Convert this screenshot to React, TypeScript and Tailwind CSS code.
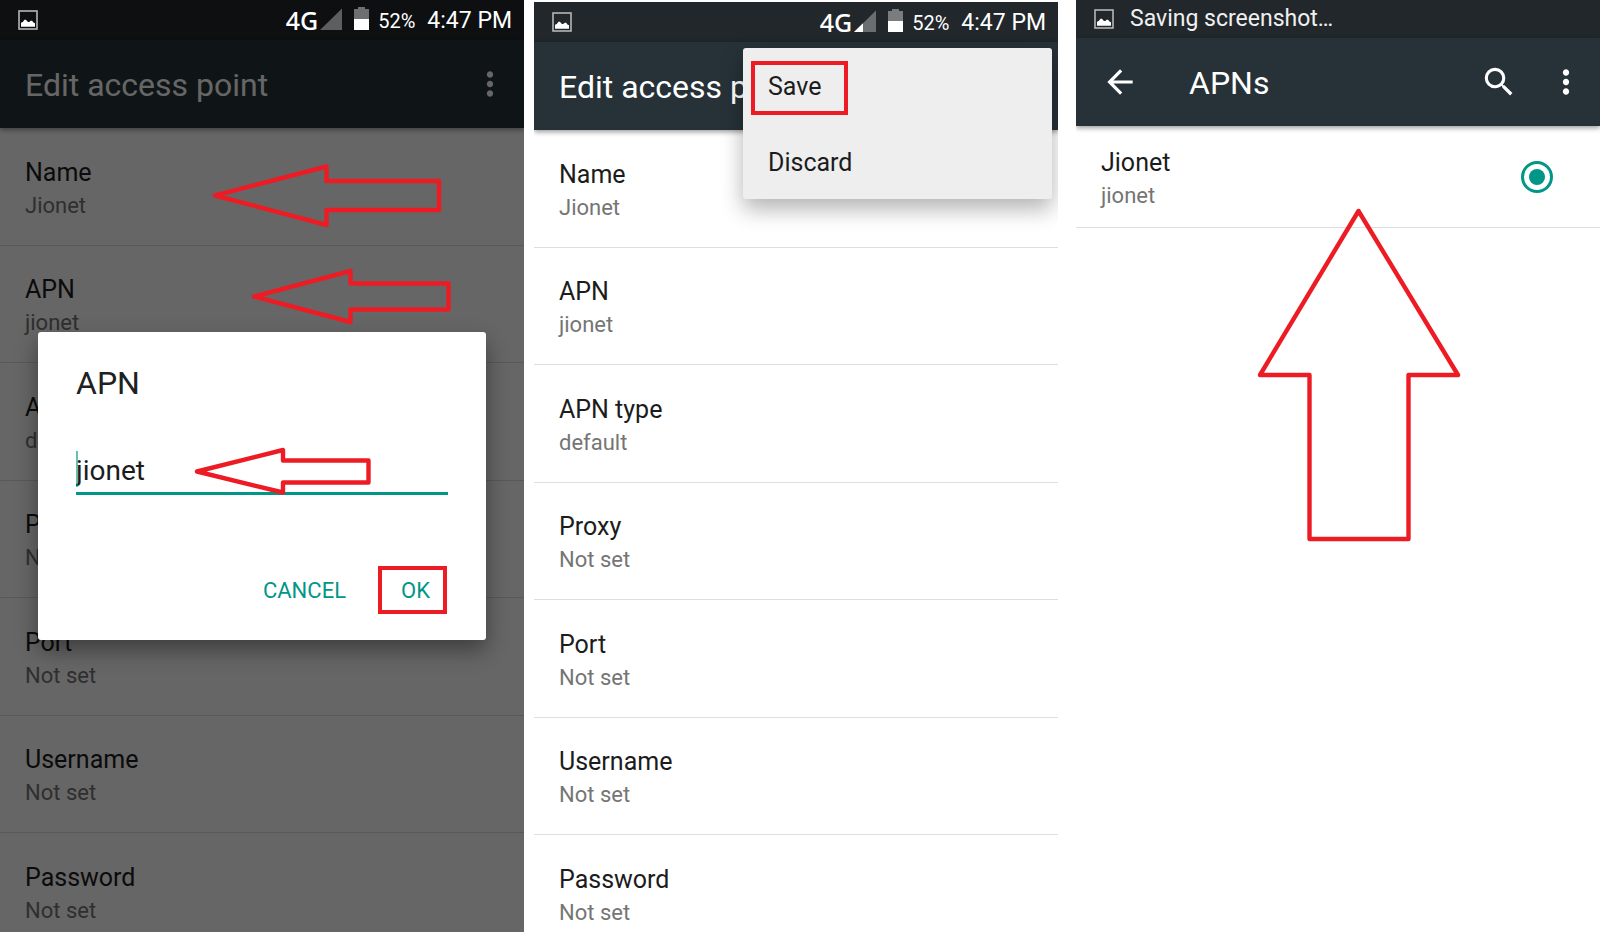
import type { ReactNode } from 'react'
import { MdArrowBack, MdMoreVert, MdSearch } from 'react-icons/md'

const fields = [
  { label: 'Name', value: 'Jionet' },
  { label: 'APN', value: 'jionet' },
  { label: 'APN type', value: 'default' },
  { label: 'Proxy', value: 'Not set' },
  { label: 'Port', value: 'Not set' },
  { label: 'Username', value: 'Not set' },
  { label: 'Password', value: 'Not set' },
]

function PictureIcon() {
  return (
    <svg className="size-5 shrink-0" viewBox="0 0 20 20" aria-hidden="true">
      <rect x="1" y="1" width="18" height="18" fill="none" stroke="#b4b7b8" strokeWidth="1.6" />
      <path d="M3 16.8v-4l1.8-.8 1.7-2.2h1.4l2 2.2h1.3l1.6-1.2h1.3l1.3 1.6 1.6.8v3.6z" fill="#fff" />
    </svg>
  )
}

function StatusBar({ signal = false }: { signal?: boolean }) {
  return (
    <div className="relative z-10 flex h-10 items-center pl-[18px] pr-3 text-white">
      <PictureIcon />
      <span className="ml-auto font-['Noto_Sans',sans-serif] text-[25px] leading-8 font-medium">4G</span>
      <svg className="ml-0.5 h-[26px] w-[22px]" viewBox="0 0 22 26" aria-hidden="true">
        <path d="M22 1.5V23H0z" fill="#fff" fillOpacity="0.33" />
        {signal && <path d="M9 14.2V23H0z" fill="#fff" />}
      </svg>
      <svg className="ml-3 h-[26px] w-[15px]" viewBox="0 0 15 26" aria-hidden="true">
        <path d="M4 0h7v2h4v10H0V2h4z" fill="#fff" fillOpacity="0.4" />
        <path d="M0 12h15v11H0z" fill="#fff" />
      </svg>
      <span className="ml-[9px] pt-0.5 text-[20px] leading-8">52%</span>
      <span className="ml-3 pt-0.5 text-[23px] leading-8">4:47 PM</span>
    </div>
  )
}

function AppBar({ children }: { children: ReactNode }) {
  return (
    <header className="relative flex h-[88px] items-center bg-[#263238] pl-[25px] pr-[15px] text-white shadow-[0_2px_5px_rgba(0,0,0,0.4)]">
      {children}
    </header>
  )
}

function MenuButton() {
  return (
    <button type="button" aria-label="More options">
      <MdMoreVert className="size-[38px]" />
    </button>
  )
}

function FieldList() {
  return (
    <ul>
      {fields.map((field) => (
        <li key={field.label} className="h-[117px] border-b border-[#dedede] odd:h-[118px]">
          <button type="button" className="flex h-full w-full flex-col justify-center pt-1.5 pl-[25px] text-left">
            <span className="text-[25px] leading-8 text-[#1c1c1c]">{field.label}</span>
            <span className="text-[22px] leading-[34px] text-[#757575]">{field.value}</span>
          </button>
        </li>
      ))}
    </ul>
  )
}

function Arrow({ className, points, viewBox }: { className: string; points: string; viewBox: string }) {
  return (
    <svg className={className} viewBox={viewBox} aria-hidden="true">
      <polygon points={points} fill="none" stroke="#ed1c24" strokeWidth="4.4" strokeLinejoin="round" />
    </svg>
  )
}

function EditDialogScreen() {
  return (
    <section className="relative flex-1 overflow-hidden bg-white">
      <div className="absolute inset-0 z-1 bg-black/60" />
      <div className="bg-[#21272b]">
        <StatusBar />
      </div>
      <AppBar>
        <h1 className="flex-1 pt-0.5 text-[32px] leading-10">Edit access point</h1>
        <MenuButton />
      </AppBar>
      <FieldList />

      {/* Dialog */}
      <div className="absolute inset-0 z-20 flex items-center px-[38px] pt-10">
        <form
          role="dialog"
          aria-labelledby="dialog-title"
          className="w-full rounded-[3px] bg-white px-[38px] pt-[31px] pb-[26px] shadow-[0_10px_22px_rgba(0,0,0,0.4)]"
        >
          <label id="dialog-title" htmlFor="apn" className="block text-[32px] leading-10 text-[#212121]">
            APN
          </label>
          <div className="relative mt-[46px]">
            <span className="absolute top-0.5 left-0 h-9 w-0.5 bg-[#009688]/60" />
            <input
              id="apn"
              type="text"
              defaultValue="jionet"
              className="block h-[46px] w-full border-b-[3px] border-[#009688] text-[28px] text-[#1c1c1c] outline-none"
            />
          </div>
          <div className="mt-[71px] flex justify-end gap-8 pr-px text-[22px] text-[#009688]">
            <button type="button">CANCEL</button>
            <button type="button" className="h-12 w-[69px] border-4 border-[#ed1c24] pl-1.5">
              OK
            </button>
          </div>
        </form>
      </div>

      {/* Pointers */}
      <Arrow
        className="absolute top-[160px] left-[210px] z-30 h-[70px] w-[234px]"
        viewBox="210 160 234 70"
        points="215,195.5 326.5,166.5 326.5,181 439,181 439,210 326.5,210 326.5,225"
      />
      <Arrow
        className="absolute top-[266px] left-[250px] z-30 h-[60px] w-[202px]"
        viewBox="250 266 202 60"
        points="254,296.5 350.5,271 350.5,283.5 448.5,283.5 448.5,309.5 350.5,309.5 350.5,322"
      />
      <Arrow
        className="absolute top-[444px] left-[192px] z-30 h-[54px] w-[180px]"
        viewBox="192 444 180 54"
        points="197,471.5 283,450 283,460.5 368.5,460.5 368.5,482.5 283,482.5 283,492.5"
      />
    </section>
  )
}

function EditMenuScreen() {
  return (
    <section className="relative mt-0.5 ml-2.5 flex-1 overflow-hidden bg-white">
      <div className="bg-[#21272b]">
        <StatusBar signal />
      </div>
      <AppBar>
        <h1 className="flex-1 pt-0.5 text-[32px] leading-10">Edit access point</h1>
        <MenuButton />
      </AppBar>
      <FieldList />

      {/* Overflow menu */}
      <div
        role="menu"
        className="absolute top-[46px] right-1.5 z-20 w-[309px] rounded-[3px] bg-[#eee] text-[25px] text-[#1c1c1c] shadow-[0_10px_22px_rgba(0,0,0,0.3)]"
      >
        <button type="button" role="menuitem" className="block h-[76px] w-full pt-0.5 pl-[25px] text-left">
          Save
        </button>
        <button type="button" role="menuitem" className="block h-[75px] w-full pt-0.5 pl-[25px] text-left">
          Discard
        </button>
        <span className="absolute top-[13px] left-2 h-[54px] w-[97px] border-4 border-[#ed1c24]" />
      </div>
    </section>
  )
}

function ApnListScreen() {
  return (
    <section className="relative ml-[18px] flex-1 overflow-hidden bg-white">
      <div className="flex h-[38px] items-center gap-4 bg-[#21272b] pl-[18px] text-[23px] leading-8 text-[#f0f0f0]">
        <PictureIcon />
        <span>Saving screenshot…</span>
      </div>
      <AppBar>
        <button type="button" aria-label="Back">
          <MdArrowBack className="size-[38px]" />
        </button>
        <h1 className="flex-1 pt-0.5 pl-[50px] text-[32px] leading-10">APNs</h1>
        <button type="button" aria-label="Search" className="mr-[29px]">
          <MdSearch className="size-[38px]" />
        </button>
        <MenuButton />
      </AppBar>
      <label className="flex h-[102px] items-center border-b border-[#dedede] pr-[47px] pl-[25px]">
        <span className="flex flex-1 flex-col pt-1.5">
          <span className="text-[25px] leading-8 text-[#1c1c1c]">Jionet</span>
          <span className="text-[22px] leading-[34px] text-[#757575]">jionet</span>
        </span>
        <input
          type="radio"
          name="selected-apn"
          defaultChecked
          className="size-8 appearance-none rounded-full border-3 border-[#009688] bg-[#009688] bg-clip-content p-[5px]"
        />
      </label>
      <Arrow
        className="absolute top-[205px] left-[180px] h-[340px] w-[206px]"
        viewBox="180 205 206 340"
        points="282.5,211 382,375 332.5,375 332.5,539 233.5,539 233.5,375 184,375"
      />
    </section>
  )
}

export default function App() {
  return (
    <main className="flex h-screen overflow-hidden bg-white font-[Roboto,sans-serif]">
      <EditDialogScreen />
      <EditMenuScreen />
      <ApnListScreen />
    </main>
  )
}
